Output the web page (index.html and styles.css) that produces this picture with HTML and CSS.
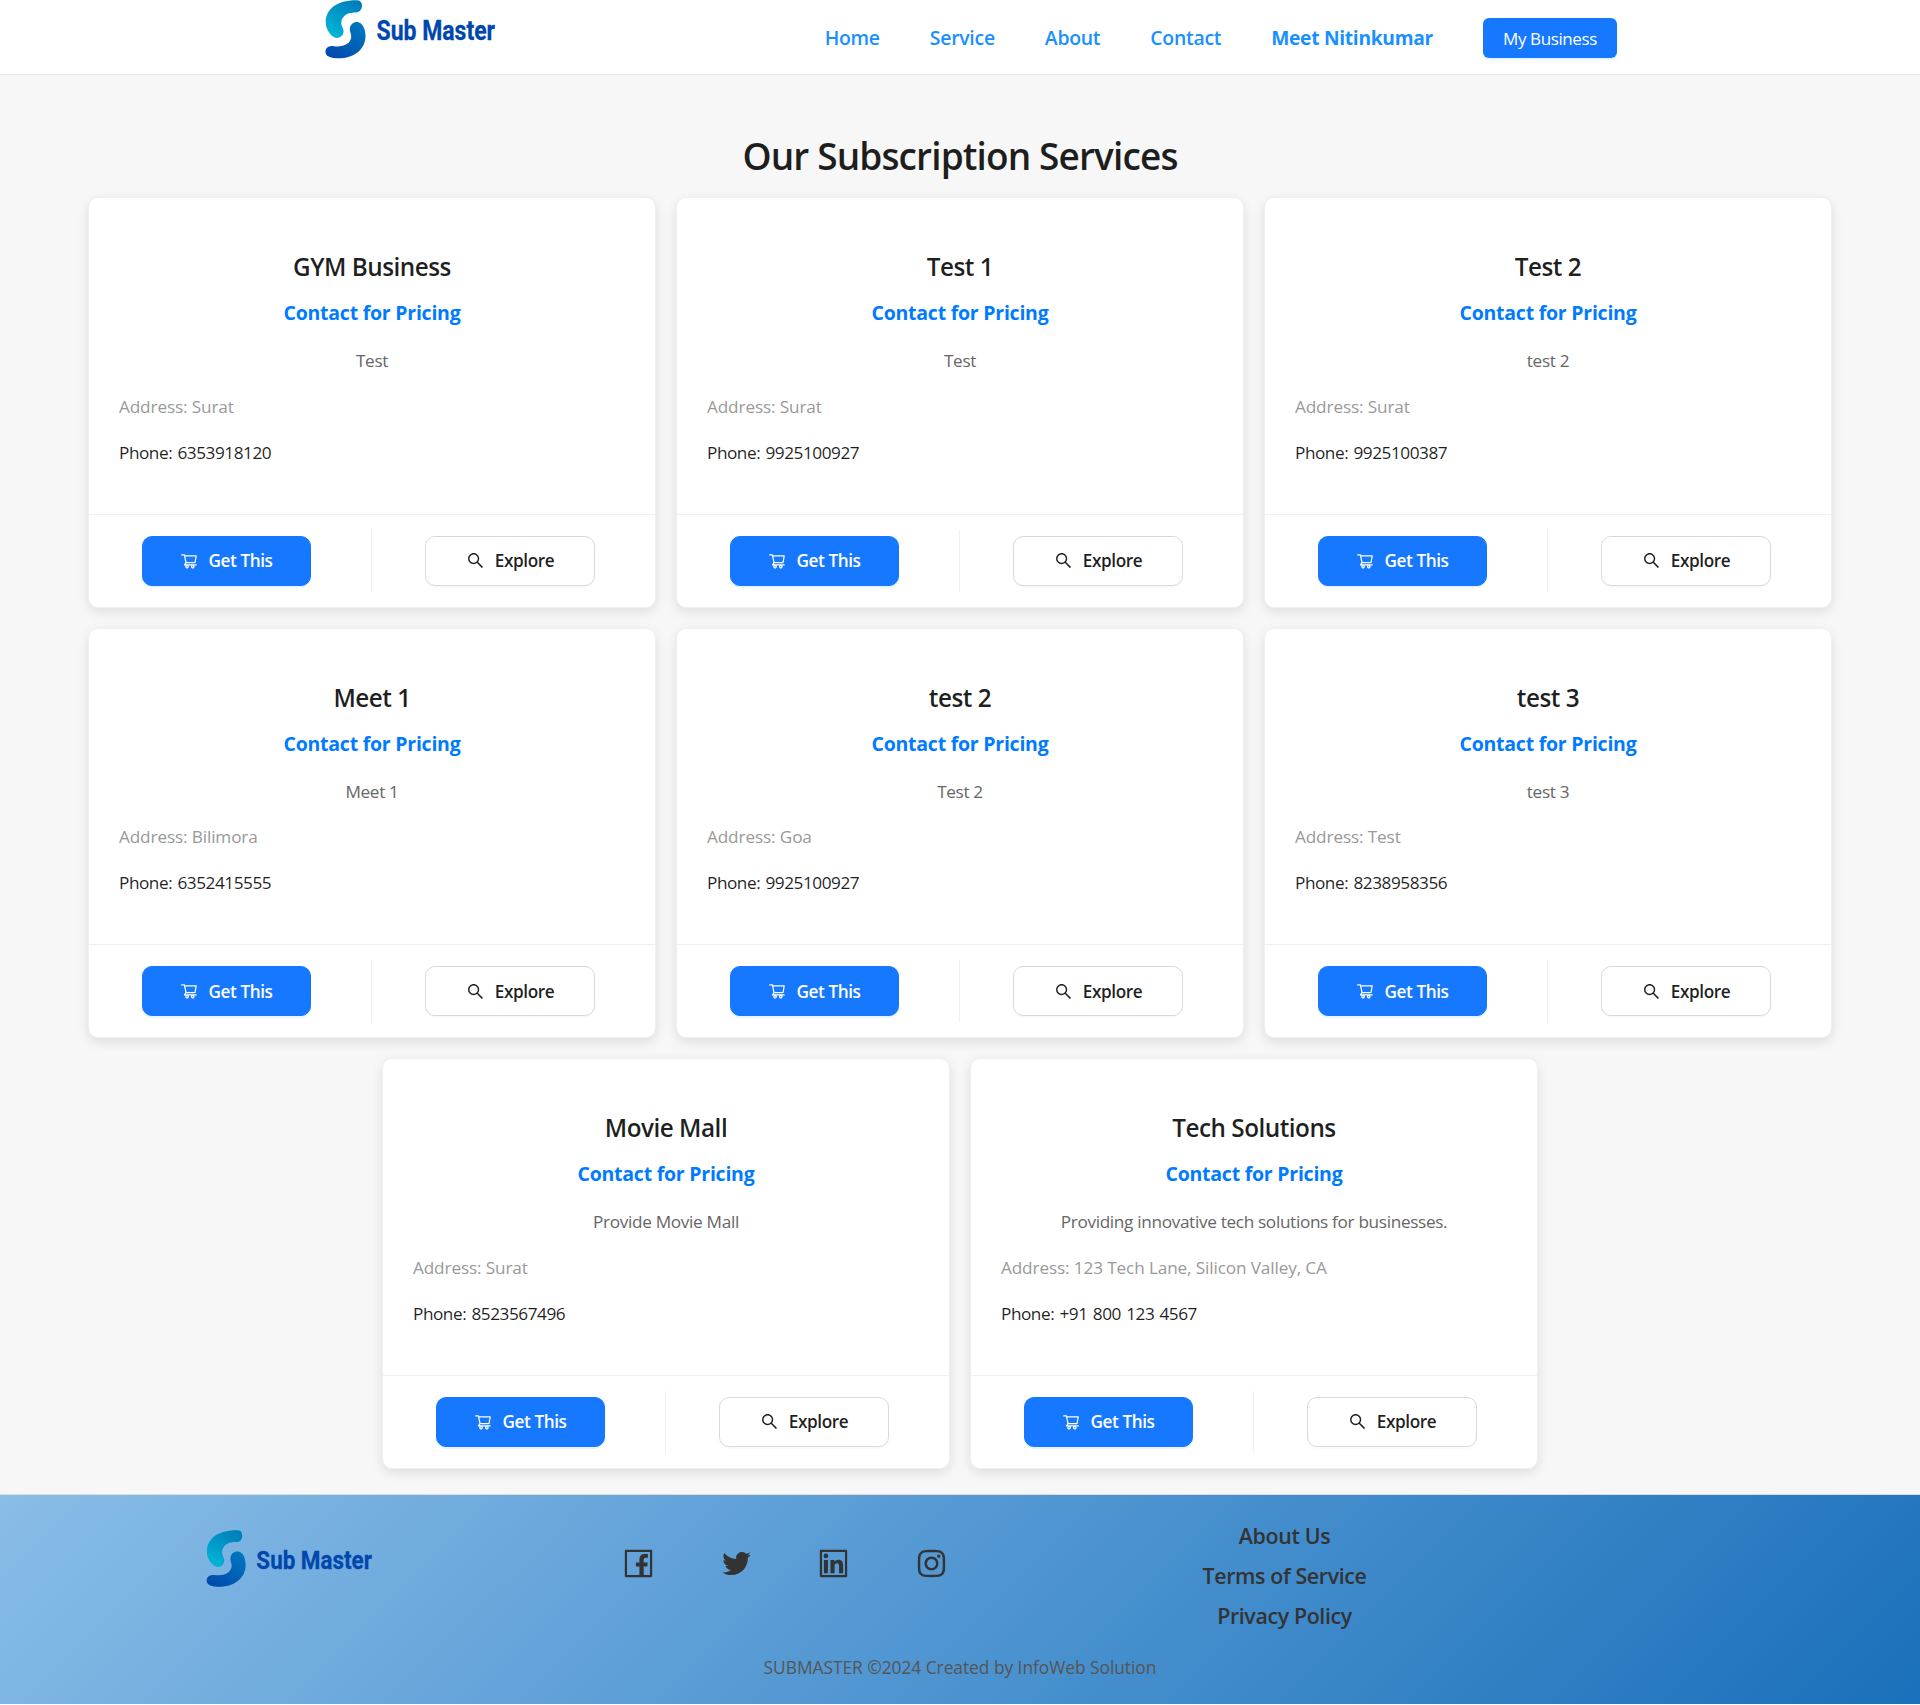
FILE: index.html
```html
<!DOCTYPE html>
<html lang="en">
<head>
<meta charset="utf-8">
<title>Sub Master</title>
<link rel="stylesheet" href="styles.css">
</head>
<body>
<svg class="sprite" aria-hidden="true">
  <defs>
    <linearGradient id="g-top" x1="0.2" y1="1" x2="0.8" y2="0"><stop offset="0" stop-color="#00b8d6"/><stop offset="1" stop-color="#007cba"/></linearGradient>
    <linearGradient id="g-bottom" x1="0.1" y1="1" x2="0.9" y2="0"><stop offset="0" stop-color="#0048ad"/><stop offset="1" stop-color="#0079bf"/></linearGradient>
  </defs>
  <symbol id="logo" viewBox="0 0 172 59">
    <path fill="url(#g-top)" d="M31 .2C12 .2.7 9 .7 22c0 6 3 10.700 6.500 14 2.500 2.400 6.500 2.600 8.800.6 2.500-2 3.200-5.500 2-8.200-2.300-3.800-2.300-7.900.2-11.200 3-4.200 8-4.800 12.500-4.800C35 12.400 37 9.200 37 5.800 37 1.400 34.500.2 31 .2z"/>
    <path fill="url(#g-bottom)" d="M25 27.600c.8-4 5-6.600 9-5.200C38.500 24 40.500 30 40.500 36 40.500 50 28 58.300 14 58.300 6 58.300.5 56.500.5 52c0-4.500 4-6.600 8.500-5.700 9 1.200 16.500-2.300 17.200-9 .2-4-2-5.700-1.200-9.700z"/>
  </symbol>
  <symbol id="cart" viewBox="0 0 1024 1024"><path d="M922.9 701.9H327.4l29.9-60.9 496.8-.9c16.8 0 31.2-12 34.2-28.6l68.800-385.100c1.800-10.100-.9-20.500-7.500-28.400a34.990 34.990 0 0 0-26.600-12.500l-632-2.100-5.400-25.400c-3.400-16.200-18-28-34.600-28H96.500a35.300 35.300 0 1 0 0 70.600h125.900L246 312.800l58.100 281.300-74.800 122.100a34.960 34.960 0 0 0-3 36.800c6 11.900 18.100 19.400 31.500 19.400h62.800a102.430 102.430 0 0 0-20.600 61.700c0 56.600 46 102.600 102.600 102.600s102.600-46 102.600-102.600c0-22.300-7.400-44-20.600-61.700h161.100a102.430 102.430 0 0 0-20.600 61.700c0 56.600 46 102.600 102.600 102.600s102.600-46 102.600-102.600c0-22.300-7.400-44-20.600-61.700H923c19.400 0 35.300-15.800 35.300-35.300a35.420 35.420 0 0 0-35.400-35.200zM305.700 253l575.800 1.900-56.400 315.800-452.300.8L305.700 253zm96.900 612.700c-17.400 0-31.600-14.200-31.600-31.600 0-17.400 14.200-31.600 31.600-31.600s31.600 14.200 31.600 31.600a31.600 31.600 0 0 1-31.600 31.600zm325.100 0c-17.400 0-31.600-14.200-31.600-31.600 0-17.400 14.200-31.600 31.600-31.600s31.600 14.200 31.600 31.600a31.600 31.600 0 0 1-31.600 31.600z"/></symbol>
  <symbol id="search" viewBox="0 0 1024 1024"><path d="M909.6 854.5L649.9 594.8C690.2 542.7 712 479 712 412c0-80.200-31.300-155.400-87.900-212.100-56.600-56.700-132-87.900-212.100-87.900s-155.500 31.300-212.100 87.900C143.200 256.500 112 331.800 112 412c0 80.100 31.300 155.500 87.900 212.100C256.500 680.800 331.800 712 412 712c67 0 130.600-21.800 182.700-62l259.700 259.600a8.200 8.200 0 0 0 11.600 0l43.600-43.500a8.200 8.200 0 0 0 0-11.600zM570.4 570.4C528 612.7 471.8 636 412 636s-116-23.300-158.400-65.600C211.3 528 188 471.8 188 412s23.300-116.100 65.600-158.400C296 211.3 352.2 188 412 188s116.100 23.200 158.400 65.600S636 352.200 636 412s-23.300 116.100-65.600 158.400z"/></symbol>
  <symbol id="facebook" viewBox="0 0 1024 1024"><path d="M880 112H144c-17.700 0-32 14.300-32 32v736c0 17.700 14.300 32 32 32h736c17.700 0 32-14.300 32-32V144c0-17.700-14.300-32-32-32zm-32 736H663.9V602.2h104l15.600-120.700H663.9v-77.100c0-35 9.700-58.800 59.800-58.800h63.900v-108c-11.100-1.500-49-4.800-93.200-4.800-92.200 0-155.300 56.300-155.300 159.600v89H434.900v120.700h104.300V848H176V176h672v672z"/></symbol>
  <symbol id="twitter" viewBox="0 0 1024 1024"><path d="M928 254.300c-30.600 13.200-63.900 22.700-98.200 26.400a170.100 170.100 0 0 0 75-94 336.640 336.640 0 0 1-108.200 41.200A170.100 170.100 0 0 0 672 174c-94.500 0-170.500 76.600-170.500 170.600 0 13.200 1.600 26.400 4.200 39.100-141.500-7.400-267.700-75-351.600-178.500a169.320 169.320 0 0 0-23.200 86.100c0 59.200 30.100 111.400 76 142.100a172 172 0 0 1-77.100-21.700v2.100c0 82.900 58.600 151.600 136.700 167.400a180.600 180.600 0 0 1-44.900 5.800c-11.100 0-21.600-1.100-32.200-2.600C211 652 273.900 701.100 348.800 702.700c-58.600 45.900-132 72.900-211.700 72.900-14.300 0-27.500-.5-41.200-2.100C171.500 822 261.200 850 357.800 850 671.400 850 843 590.200 843 364.700c0-7.400 0-14.800-.5-22.200 33.200-24.300 62.300-54.400 85.500-88.200z"/></symbol>
  <symbol id="linkedin" viewBox="0 0 1024 1024"><path d="M880 112H144c-17.700 0-32 14.300-32 32v736c0 17.700 14.300 32 32 32h736c17.700 0 32-14.300 32-32V144c0-17.700-14.300-32-32-32zm-32 736H176V176h672v672zM230.600 411.900h118.700v381.800H230.600zM290 359.800a68.800 68.800 0 1 0 0-137.600 68.800 68.800 0 0 0 0 137.600zM793.700 793.700H675.100V608c0-44.300-.8-101.200-61.700-101.200-61.700 0-71.200 48.200-71.200 98v188.900H423.600V411.900h113.800v52.200h1.600c15.800-30 54.500-61.700 112.300-61.700 120.200 0 142.400 79.100 142.400 181.900v209.400z"/></symbol>
  <symbol id="instagram" viewBox="0 0 1024 1024"><path fill-rule="evenodd" d="M512 306.900c-113.500 0-205.100 91.600-205.100 205.100S398.500 717.100 512 717.100 717.100 625.500 717.100 512 625.500 306.900 512 306.900zm0 338.400c-73.400 0-133.300-59.900-133.300-133.300S438.600 378.700 512 378.700 645.300 438.600 645.300 512 585.400 645.300 512 645.300zm213.500-394.600c-26.500 0-47.900 21.400-47.900 47.900s21.400 47.900 47.900 47.900 47.900-21.300 47.900-47.900a47.840 47.840 0 0 0-47.900-47.900zM911.800 512c0-55.200.5-109.900-2.600-165-3.100-64-17.700-120.800-64.500-167.600-46.900-46.900-103.600-61.400-167.600-64.500-55.200-3.100-109.900-2.600-165-2.600-55.200 0-109.900-.5-165 2.600-64 3.100-120.800 17.700-167.600 64.500C132.600 226.300 118.100 283 115 347c-3.100 55.200-2.600 109.900-2.600 165s-.5 109.900 2.600 165c3.100 64 17.700 120.800 64.500 167.600 46.900 46.900 103.600 61.400 167.600 64.500 55.200 3.100 109.900 2.600 165 2.600 55.200 0 109.900.5 165-2.600 64-3.100 120.800-17.700 167.600-64.500 46.900-46.900 61.400-103.600 64.500-167.600 3.200-55.100 2.600-109.800 2.600-165zm-88 235.800c-7.300 18.200-16.100 31.800-30.200 45.800-14.100 14.100-27.600 22.900-45.800 30.200C695.200 844.700 570.300 840 512 840c-58.300 0-183.300 4.700-235.900-16.100-18.200-7.300-31.800-16.100-45.800-30.200-14.100-14.100-22.900-27.600-30.200-45.800C179.300 695.200 184 570.300 184 512c0-58.300-4.700-183.300 16.100-235.900 7.300-18.200 16.100-31.800 30.200-45.800s27.600-22.900 45.800-30.200C328.700 179.300 453.700 184 512 184s183.300-4.700 235.900 16.100c18.200 7.300 31.800 16.100 45.800 30.200 14.100 14.100 22.900 27.600 30.200 45.800C844.700 328.700 840 453.700 840 512c0 58.300 4.700 183.200-16.200 235.800z"/></symbol>
</svg>

<header class="header">
  <svg class="logo" viewBox="0 0 172 59"><use href="#logo" width="172" height="59"/><text class="logo-text" x="51.500" y="40.300" textLength="118.500" lengthAdjust="spacingAndGlyphs">Sub Master</text></svg>
  <nav class="nav">
    <a>Home</a><a>Service</a><a>About</a><a>Contact</a><a class="user">Meet Nitinkumar</a>
    <button class="business">My Business</button>
  </nav>
</header>

<main class="main">
  <h1 class="heading">Our Subscription Services</h1>
  <section class="cards">
    <article class="card">
      <div class="body"><h2 class="title">GYM Business</h2><p class="price">Contact for Pricing</p><p class="desc">Test</p><p class="address">Address: Surat</p><p class="phone">Phone: 6353918120</p></div>
      <div class="actions"><div class="action"><button class="btn primary"><svg class="icon"><use href="#cart"/></svg>Get This</button></div><div class="action"><button class="btn"><svg class="icon find"><use href="#search"/></svg>Explore</button></div></div>
    </article>
    <article class="card">
      <div class="body"><h2 class="title">Test 1</h2><p class="price">Contact for Pricing</p><p class="desc">Test</p><p class="address">Address: Surat</p><p class="phone">Phone: 9925100927</p></div>
      <div class="actions"><div class="action"><button class="btn primary"><svg class="icon"><use href="#cart"/></svg>Get This</button></div><div class="action"><button class="btn"><svg class="icon find"><use href="#search"/></svg>Explore</button></div></div>
    </article>
    <article class="card">
      <div class="body"><h2 class="title">Test 2</h2><p class="price">Contact for Pricing</p><p class="desc">test 2</p><p class="address">Address: Surat</p><p class="phone">Phone: 9925100387</p></div>
      <div class="actions"><div class="action"><button class="btn primary"><svg class="icon"><use href="#cart"/></svg>Get This</button></div><div class="action"><button class="btn"><svg class="icon find"><use href="#search"/></svg>Explore</button></div></div>
    </article>
    <article class="card">
      <div class="body"><h2 class="title">Meet 1</h2><p class="price">Contact for Pricing</p><p class="desc">Meet 1</p><p class="address">Address: Bilimora</p><p class="phone">Phone: 6352415555</p></div>
      <div class="actions"><div class="action"><button class="btn primary"><svg class="icon"><use href="#cart"/></svg>Get This</button></div><div class="action"><button class="btn"><svg class="icon find"><use href="#search"/></svg>Explore</button></div></div>
    </article>
    <article class="card">
      <div class="body"><h2 class="title">test 2</h2><p class="price">Contact for Pricing</p><p class="desc">Test 2</p><p class="address">Address: Goa</p><p class="phone">Phone: 9925100927</p></div>
      <div class="actions"><div class="action"><button class="btn primary"><svg class="icon"><use href="#cart"/></svg>Get This</button></div><div class="action"><button class="btn"><svg class="icon find"><use href="#search"/></svg>Explore</button></div></div>
    </article>
    <article class="card">
      <div class="body"><h2 class="title">test 3</h2><p class="price">Contact for Pricing</p><p class="desc">test 3</p><p class="address">Address: Test</p><p class="phone">Phone: 8238958356</p></div>
      <div class="actions"><div class="action"><button class="btn primary"><svg class="icon"><use href="#cart"/></svg>Get This</button></div><div class="action"><button class="btn"><svg class="icon find"><use href="#search"/></svg>Explore</button></div></div>
    </article>
    <article class="card">
      <div class="body"><h2 class="title">Movie Mall</h2><p class="price">Contact for Pricing</p><p class="desc">Provide Movie Mall</p><p class="address">Address: Surat</p><p class="phone">Phone: 8523567496</p></div>
      <div class="actions"><div class="action"><button class="btn primary"><svg class="icon"><use href="#cart"/></svg>Get This</button></div><div class="action"><button class="btn"><svg class="icon find"><use href="#search"/></svg>Explore</button></div></div>
    </article>
    <article class="card">
      <div class="body"><h2 class="title">Tech Solutions</h2><p class="price">Contact for Pricing</p><p class="desc">Providing innovative tech solutions for businesses.</p><p class="address">Address: 123 Tech Lane, Silicon Valley, CA</p><p class="phone">Phone: +91 800 123 4567</p></div>
      <div class="actions"><div class="action"><button class="btn primary"><svg class="icon"><use href="#cart"/></svg>Get This</button></div><div class="action"><button class="btn"><svg class="icon find"><use href="#search"/></svg>Explore</button></div></div>
    </article>
  </section>
</main>

<footer class="footer">
  <div class="footer-top">
    <svg class="footer-logo" viewBox="0 0 172 59"><use href="#logo" width="172" height="59"/><text class="logo-text" x="51.500" y="40.300" textLength="118.500" lengthAdjust="spacingAndGlyphs">Sub Master</text></svg>
    <div class="social">
      <svg><use href="#facebook"/></svg><svg><use href="#twitter"/></svg><svg><use href="#linkedin"/></svg><svg><use href="#instagram"/></svg>
    </div>
    <div class="links"><a>About Us</a><a>Terms of Service</a><a>Privacy Policy</a></div>
  </div>
  <p class="copyright">SUBMASTER ©2024 Created by InfoWeb Solution</p>
</footer>
</body>
</html>
```
FILE: styles.css
```css
* { box-sizing: border-box; margin: 0; padding: 0; }
body { background: #fff; font-family: "Segoe UI", "Open Sans", "Noto Sans", sans-serif; color: rgba(0, 0, 0, .88); }
button { font-family: inherit; }
.sprite { display: block; width: 0; height: 0; }
.logo-text { font-family: Roboto, sans-serif; font-weight: 700; font-size: 27px; fill: #0047ad; stroke: #0047ad; stroke-width: .3px; }

.header { display: flex; justify-content: space-between; height: 75px; padding: 0 303px 0 325px; background: #fff; border-bottom: 1px solid #e6e6e6; }
.logo { width: 172px; height: 59px; }
.nav { display: flex; align-items: center; gap: 50px; height: 76px; font-weight: 600; font-size: 19.4px; letter-spacing: -.25px; color: #1890ff; white-space: nowrap; }
.nav a { padding-bottom: 2px; }
.nav .user { font-weight: 700; font-size: 19.2px; letter-spacing: -.28px; }
.business { width: 134px; height: 40px; border: 0; border-radius: 6px; background: #1677ff; color: #fff; font-size: 17px; letter-spacing: -.4px; box-shadow: 0 2px 0 rgba(5, 145, 255, .1); }

.main { height: 1419px; padding: 58px 88px 0; background: #f7f7f7; }
.heading { height: 64px; line-height: 46px; text-align: center; font-weight: 600; font-size: 37px; letter-spacing: -.87px; }
.cards { display: flex; flex-wrap: wrap; justify-content: center; gap: 20px; }
.card { width: 568px; height: 410.5px; border: 1px solid #f0f0f0; border-radius: 10px; background: #fff; box-shadow: 0 4px 12px rgba(0, 0, 0, .1); }
.body { height: 315.5px; padding: 54px 30px 0; text-align: center; }
.title { line-height: 29px; font-weight: 600; font-size: 24.3px; letter-spacing: -.5px; }
.price { margin-top: 17px; line-height: 29px; font-weight: 700; font-size: 19.5px; letter-spacing: -.24px; color: #007bff; }
.desc { margin-top: 20px; line-height: 28px; font-size: 17.2px; letter-spacing: -.33px; color: #666; }
.address { margin-top: 17.5px; line-height: 28px; text-align: left; font-size: 17.2px; letter-spacing: -.13px; color: #999; }
.phone { margin-top: 18px; line-height: 28px; text-align: left; font-size: 17.2px; letter-spacing: -.45px; word-spacing: 1.2px; }
.actions { display: flex; height: 93px; padding-top: 15px; border-top: 1px solid #f0f0f0; }
.action { width: 283px; height: 62px; padding: 6px 0 0 53px; }
.action:first-child { border-right: 1px solid #f0f0f0; }
.btn { display: flex; align-items: center; justify-content: center; gap: 10px; width: 170px; height: 50px; border: 1px solid #d9d9d9; border-radius: 10px; background: #fff; color: rgba(0, 0, 0, .88); font-weight: 600; font-size: 17.2px; letter-spacing: -.42px; box-shadow: 0 2px 0 rgba(0, 0, 0, .02); }
.btn.primary { width: 169px; border-color: #1677ff; background: #1677ff; color: #fff; box-shadow: 0 2px 0 rgba(5, 145, 255, .1); }
.icon { width: 18px; height: 18px; fill: currentColor; }
.icon.find { width: 19px; height: 19px; }

.footer { height: 210px; border-top: 1px solid #dcdcdc; background: linear-gradient(135deg, #8abde7 0%, #5096d2 50%, #1a70ba 100%); }
.footer-top { display: flex; padding: 21px 0 0 206px; height: 151px; }
.footer-logo { width: 168px; height: 57.500px; margin-top: 14px; }
.social { display: flex; gap: 62.500px; margin: 30px 0 0 247px; }
.social svg { width: 35px; height: 35px; fill: #333; }
.links { display: flex; flex-direction: column; width: 200px; margin-left: 236px; text-align: center; line-height: 40px; font-weight: 600; font-size: 21.4px; letter-spacing: -.38px; color: #333; }
.copyright { line-height: 42px; text-align: center; font-size: 17.4px; letter-spacing: -.05px; color: #555; }
```
